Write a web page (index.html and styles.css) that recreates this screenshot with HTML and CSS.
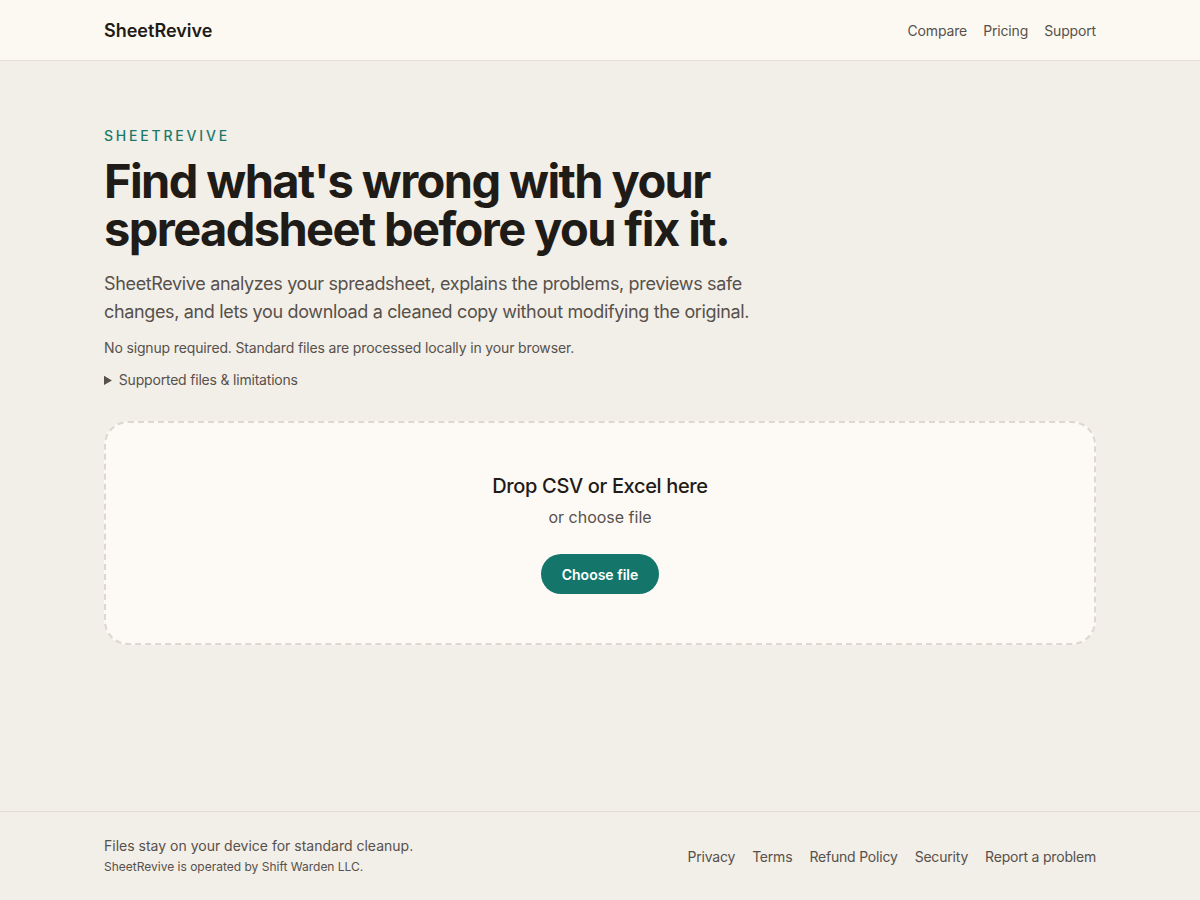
FILE: index.html
```html
<!doctype html>
<html lang="en">
  <head>
    <meta charset="UTF-8" />
    <meta name="viewport" content="width=device-width, initial-scale=1.0" />
    <title>SheetRevive</title>
    <link rel="stylesheet" href="styles.css">
  </head>
  <body>
    <header class="site-header">
      <div class="wrap header-inner">
        <a class="brand" href="#">SheetRevive</a>
        <nav class="nav">
          <a href="#">Compare</a>
          <a href="#">Pricing</a>
          <a href="#">Support</a>
        </nav>
      </div>
    </header>

    <main class="wrap hero">
      <p class="eyebrow">SheetRevive</p>
      <h1>Find what's wrong with your spreadsheet before you fix it.</h1>
      <p class="lead">
        SheetRevive analyzes your spreadsheet, explains the problems, previews safe
        changes, and lets you download a cleaned copy without modifying the original.
      </p>
      <p class="note">No signup required. Standard files are processed locally in your browser.</p>
      <details class="limits">
        <summary>Supported files &amp; limitations</summary>
      </details>

      <div class="dropzone">
        <p class="drop-title">Drop CSV or Excel here</p>
        <p class="drop-sub">or choose file</p>
        <button class="btn">Choose file</button>
      </div>
    </main>

    <footer class="site-footer">
      <div class="wrap footer-inner">
        <div>
          <p class="foot-main">Files stay on your device for standard cleanup.</p>
          <p class="foot-small">SheetRevive is operated by Shift Warden LLC.</p>
        </div>
        <nav class="foot-links">
          <a href="#">Privacy</a>
          <a href="#">Terms</a>
          <a href="#">Refund Policy</a>
          <a href="#">Security</a>
          <a href="#">Report a problem</a>
        </nav>
      </div>
    </footer>
  </body>
</html>
```

FILE: styles.css
```css
* {
  box-sizing: border-box;
}
body {
  margin: 0;
  font-family: Inter, "Liberation Sans", sans-serif;
  background: #f2eee8;
  color: #1f1b17;
  min-height: 900px;
  display: flex;
  flex-direction: column;
}
a {
  color: inherit;
  text-decoration: none;
}
p {
  margin: 0;
}
.wrap {
  width: 992px;
  margin: 0 auto;
}
.site-header {
  background: #fcf9f3;
  border-bottom: 1px solid #e6dfd3;
  height: 61px;
}
.header-inner {
  height: 60px;
  display: flex;
  align-items: center;
  justify-content: space-between;
}
.brand {
  font-size: 18px;
  font-weight: 600;
  color: #1f1b17;
}
.nav {
  display: flex;
  gap: 16px;
  font-size: 14px;
  letter-spacing: -0.15px;
  color: #57514b;
}
.hero {
  flex: 1;
  padding-top: 66px;
}
.eyebrow {
  font-size: 14px;
  letter-spacing: 2.8px;
  text-transform: uppercase;
  color: #1a7a6a;
  font-weight: 500;
  line-height: 18px;
}
h1 {
  margin: 12px 0 0;
  font-size: 47px;
  line-height: 48px;
  font-weight: 700;
  letter-spacing: -1.6px;
  max-width: 700px;
  color: #1f1b17;
}
.lead {
  margin-top: 17px;
  font-size: 18px;
  line-height: 28px;
  letter-spacing: -0.35px;
  color: #57514b;
  max-width: 680px;
}
.note {
  margin-top: 11px;
  font-size: 14px;
  line-height: 22px;
  letter-spacing: -0.15px;
  color: #57514b;
}
.limits {
  margin-top: 10px;
  font-size: 14px;
  letter-spacing: -0.2px;
  color: #57514b;
}
.limits summary {
  cursor: pointer;
  line-height: 22px;
}
.dropzone {
  margin-top: 30px;
  border: 2px dashed #ded8ce;
  border-radius: 24px;
  background: #fdfaf5;
  height: 224px;
  display: flex;
  flex-direction: column;
  align-items: center;
  justify-content: center;
}
.drop-title {
  font-size: 20px;
  font-weight: 500;
  letter-spacing: -0.35px;
  color: #1f1b17;
  line-height: 28px;
}
.drop-sub {
  margin-top: 6px;
  font-size: 16px;
  color: #57514b;
  line-height: 22px;
}
.btn {
  margin-top: 26px;
  height: 40px;
  padding: 0 21px;
  border: none;
  border-radius: 999px;
  background: #14766b;
  color: #fff;
  font-family: inherit;
  font-size: 14px;
  font-weight: 600;
  cursor: pointer;
}
.site-footer {
  border-top: 1px solid #e2dbd1;
  height: 89px;
}
.footer-inner {
  height: 88px;
  display: flex;
  align-items: center;
  justify-content: space-between;
}
.foot-main {
  font-size: 14px;
  color: #57514b;
  line-height: 20px;
}
.foot-small {
  margin-top: 2px;
  font-size: 12px;
  color: #57514b;
  line-height: 18px;
}
.foot-links {
  display: flex;
  gap: 17px;
  font-size: 14px;
  letter-spacing: -0.2px;
  color: #57514b;
}
```
